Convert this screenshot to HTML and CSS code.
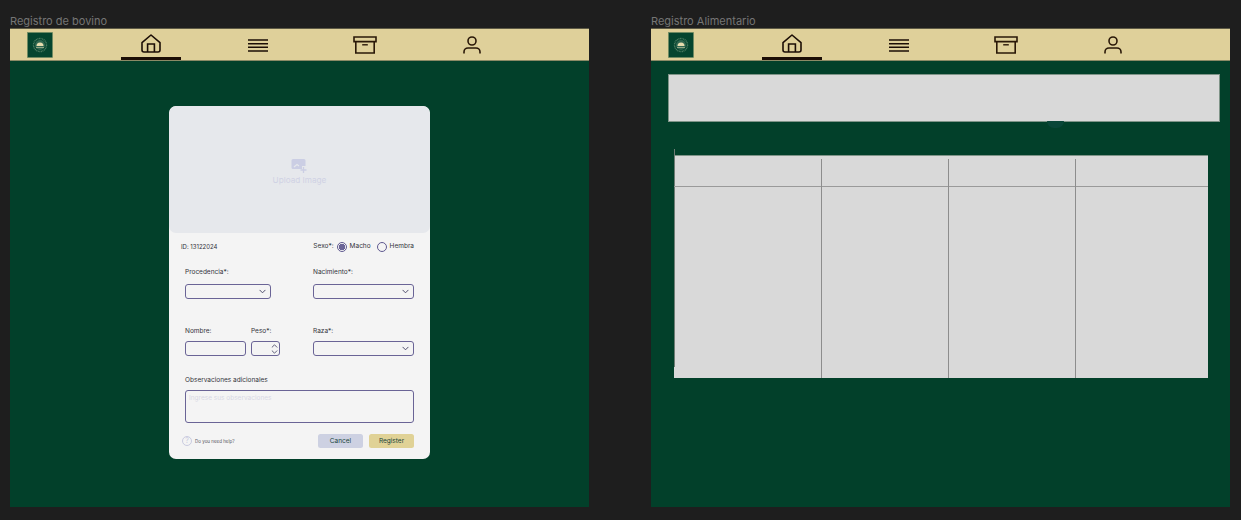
FILE: index.html
```html
<!DOCTYPE html>
<html lang="es">
<head>
<meta charset="utf-8">
<title>Registro</title>
<link rel="stylesheet" href="styles.css">
</head>
<body>
<svg class="defs" width="0" height="0" aria-hidden="true">
  <defs>
    <symbol id="i-logo" viewBox="0 0 26 26">
      <rect x="0.5" y="0.5" width="25" height="25" fill="#05452f" stroke="#6f8a62" stroke-width="0.6"/>
      <circle cx="13" cy="13" r="6.500" fill="none" stroke="#4d7c62" stroke-width="1.400" stroke-dasharray="1 .6"/>
      <circle cx="13" cy="13" r="5" fill="#2f6650"/>
      <path d="M9.500 14a3.500 3.500 0 0 1 7 0z" fill="#e6dcae"/>
      <rect x="9" y="15" width="8" height="1" fill="#8fa585"/>
    </symbol>
    <symbol id="i-home" viewBox="0 0 22 20">
      <path d="M2 8.600 11 1l9 7.600V16a2 2 0 0 1-2 2H4a2 2 0 0 1-2-2z" fill="none" stroke="#1c0e06" stroke-width="1.600" stroke-linejoin="round"/>
      <path d="M7.600 18V10h6.800v8" fill="none" stroke="#1c0e06" stroke-width="1.600"/>
    </symbol>
    <symbol id="i-menu" viewBox="0 0 20 13">
      <path d="M0 1h20M0 4.700h20M0 8.300h20M0 12h20" fill="none" stroke="#1c0e06" stroke-width="1.400"/>
    </symbol>
    <symbol id="i-box" viewBox="0 0 24 18">
      <path d="M1 1h22v4.600H1zM2.800 5.600V17h18.400V5.600" fill="none" stroke="#2a1808" stroke-width="1.600"/>
      <path d="M9.200 8.800h5.600" fill="none" stroke="#2a1808" stroke-width="1.400"/>
    </symbol>
    <symbol id="i-user" viewBox="0 0 18 18">
      <circle cx="9" cy="5" r="4" fill="none" stroke="#2a1808" stroke-width="1.600"/>
      <path d="M1 17.500v-1.500a4 4 0 0 1 4-4h8a4 4 0 0 1 4 4v1.500" fill="none" stroke="#2a1808" stroke-width="1.600"/>
    </symbol>
    <symbol id="i-chev" viewBox="0 0 8 5">
      <path d="M1 1l3 3 3-3" fill="none" stroke="#4b4a6a" stroke-width="1.100" stroke-linecap="round" stroke-linejoin="round"/>
    </symbol>
  </defs>
</svg>

<main class="canvas">
  <section class="artboard">
    <h2 class="artboard-title">Registro de bovino</h2>
    <div class="frame">
      <nav class="nav">
        <svg class="logo"><use href="#i-logo"/></svg>
        <a class="nav-item is-active"><svg class="ic-home"><use href="#i-home"/></svg></a>
        <a class="nav-item"><svg class="ic-menu"><use href="#i-menu"/></svg></a>
        <a class="nav-item"><svg class="ic-box"><use href="#i-box"/></svg></a>
        <a class="nav-item"><svg class="ic-user"><use href="#i-user"/></svg></a>
      </nav>
      <div class="frame-body center">
        <form class="card">
          <div class="upload">
            <svg class="upload-icon" viewBox="0 0 17 16">
              <path d="M2 1h11a1.500 1.500 0 0 1 1.500 1.500V8H11v3H2a1.500 1.500 0 0 1-1.500-1.500v-7A1.500 1.500 0 0 1 2 1z" fill="#cbcee4"/>
              <path d="M3 9l3-2.500 2 1.500" fill="none" stroke="#e6e8ec" stroke-width="1.200"/>
              <path d="M12.500 9v6M9.500 12h6" stroke="#cbcee4" stroke-width="1.300" fill="none"/>
            </svg>
            <span class="upload-text">Upload Image</span>
          </div>
          <div class="form">
            <div class="id-row">
              <span class="txt txt-id">ID: 13122024</span>
              <div class="sex">
                <span class="txt">Sexo*:</span>
                <span class="radio is-on"></span><span class="txt">Macho</span>
                <span class="radio"></span><span class="txt">Hembra</span>
              </div>
            </div>
            <div class="row row-a">
              <div class="col-l">
                <span class="txt">Procedencia*:</span>
                <div class="field sel sel-l"><svg class="chev"><use href="#i-chev"/></svg></div>
              </div>
              <div class="col-r">
                <span class="txt">Nacimiento*:</span>
                <div class="field sel"><svg class="chev"><use href="#i-chev"/></svg></div>
              </div>
            </div>
            <div class="row row-b">
              <div class="col-l pair">
                <div class="col-name">
                  <span class="txt">Nombre:</span>
                  <div class="field"></div>
                </div>
                <div class="col-peso">
                  <span class="txt">Peso*:</span>
                  <div class="field stepper">
                    <svg class="step up"><use href="#i-chev"/></svg>
                    <svg class="step"><use href="#i-chev"/></svg>
                  </div>
                </div>
              </div>
              <div class="col-r">
                <span class="txt">Raza*:</span>
                <div class="field sel"><svg class="chev"><use href="#i-chev"/></svg></div>
              </div>
            </div>
            <div class="obs">
              <span class="txt">Observaciones adicionales</span>
              <div class="area">Ingrese sus observaciones</div>
            </div>
            <div class="foot">
              <div class="help">
                <span class="help-ic">?</span>
                <span class="help-txt">Do you need help?</span>
              </div>
              <div class="btns">
                <button class="btn btn-cancel" type="button">Cancel</button>
                <button class="btn btn-reg" type="button">Register</button>
              </div>
            </div>
          </div>
        </form>
      </div>
    </div>
  </section>

  <section class="artboard">
    <h2 class="artboard-title">Registro Alimentario</h2>
    <div class="frame">
      <nav class="nav">
        <svg class="logo"><use href="#i-logo"/></svg>
        <a class="nav-item is-active"><svg class="ic-home"><use href="#i-home"/></svg></a>
        <a class="nav-item"><svg class="ic-menu"><use href="#i-menu"/></svg></a>
        <a class="nav-item"><svg class="ic-box"><use href="#i-box"/></svg></a>
        <a class="nav-item"><svg class="ic-user"><use href="#i-user"/></svg></a>
      </nav>
      <div class="frame-body feed">
        <div class="panel"><span class="blob"></span></div>
        <div class="table">
          <span class="tick"></span>
          <div class="tcol"><div class="thead"></div></div>
          <div class="tcol lined"><div class="thead"></div></div>
          <div class="tcol lined"><div class="thead"></div></div>
          <div class="tcol lined"><div class="thead"></div></div>
        </div>
      </div>
    </div>
  </section>
</main>
</body>
</html>
```
FILE: styles.css
```css
* { box-sizing: border-box; }
html, body { margin: 0; height: 100%; }
body {
  background: #1e1e1e;
  font-family: "Inter", "Noto Sans", sans-serif;
  overflow: hidden;
}
.defs { position: absolute; }
.canvas {
  display: flex;
  gap: 62px;
  padding: 14px 0 0 10px;
}
.artboard { width: 579px; }
.artboard-title {
  margin: 0;
  height: 14px;
  font: 400 11px/14px "Inter", sans-serif;
  color: #757575;
}
.frame {
  height: 479px;
  background: #02402a;
  display: flex;
  flex-direction: column;
}
.nav {
  height: 33px;
  flex: none;
  background: #dfd09a;
  border-top: 1px solid #5d5a45;
  border-bottom: 1px solid #8b8a66;
  display: flex;
  align-items: stretch;
  padding-left: 17px;
}
.logo { width: 26px; height: 26px; margin: 3px 68px 0 0; flex: none; }
.nav-item {
  width: 60px;
  margin-right: 47px;
  display: flex;
  justify-content: center;
  align-items: flex-start;
  position: relative;
}
.nav-item.is-active::after {
  content: "";
  position: absolute;
  left: 0;
  right: 0;
  bottom: 0;
  height: 3px;
  background: #1c0e06;
}
.ic-home { width: 22px; height: 20px; margin-top: 5px; }
.ic-menu { width: 20px; height: 13px; margin-top: 9.500px; }
.ic-box { width: 24px; height: 18px; margin-top: 6.500px; }
.ic-user { width: 18px; height: 18px; margin-top: 6.500px; }

.frame-body { flex: 1; }
.center { display: flex; justify-content: center; padding-top: 45px; }

.card {
  width: 261px;
  height: 353px;
  background: #f4f4f4;
  border-radius: 7px;
  overflow: hidden;
  display: flex;
  flex-direction: column;
}
.upload {
  height: 127px;
  flex: none;
  background: #e6e8ec;
  border-radius: 7px;
  display: flex;
  flex-direction: column;
  align-items: center;
  padding-top: 52px;
}
.upload-icon { width: 17px; height: 16px; }
.upload-text { font-size: 8.200px; line-height: 10px; color: #d0d2e4; margin-top: 1px; }
.form { padding: 0 16px; flex: 1; display: flex; flex-direction: column; }
.txt { font-size: 6.500px; line-height: 9px; color: #33333b; white-space: nowrap; }
.txt-id { font-size: 6px; }
.id-row {
  display: flex;
  justify-content: space-between;
  align-items: center;
  height: 13px;
  margin: 7px 0 0 -4px;
}
.sex { display: flex; align-items: center; gap: 2px; }
.radio {
  width: 10px;
  height: 10px;
  border-radius: 50%;
  border: 1px solid #5f5990;
  margin-right: 1px;
}
.radio.is-on { margin-left: 1px; }
.radio + .txt + .radio { margin-left: 4px; }
.radio.is-on { background: radial-gradient(circle, #6a6496 0 3px, #f4f4f4 3.500px); }
.row { display: flex; justify-content: space-between; }
.row-a { margin-top: 15px; height: 53px; }
.row-b { height: 55px; align-items: flex-start; padding-top: 6px; }
.col-l { width: 86px; display: flex; flex-direction: column; gap: 7px; }
.col-r { width: 101px; display: flex; flex-direction: column; gap: 7px; }
.row-b .col-r { gap: 5px; }
.pair { width: 95px; flex-direction: row; gap: 5px; }
.col-name { width: 61px; display: flex; flex-direction: column; gap: 5px; }
.col-peso { width: 29px; display: flex; flex-direction: column; gap: 5px; }
.field {
  height: 15px;
  border: 1px solid #6a6496;
  border-radius: 3px;
  position: relative;
}
.sel { display: flex; align-items: center; justify-content: flex-end; padding-right: 4px; }
.chev { width: 7px; height: 5px; }
.stepper { display: flex; flex-direction: column; align-items: flex-end; justify-content: center; padding-right: 1px; gap: 2px; }
.step { width: 7px; height: 4px; }
.step.up { transform: scaleY(-1); }
.obs { display: flex; flex-direction: column; gap: 5px; }
.area {
  height: 33px;
  border: 1px solid #6a6496;
  border-radius: 3px;
  padding: 3px;
  font-size: 6.500px;
  line-height: 9px;
  color: #d8d8e4;
}
.foot {
  display: flex;
  justify-content: space-between;
  align-items: center;
  margin: 11px 0 0 -3px;
}
.help { display: flex; align-items: center; gap: 3px; }
.help-ic {
  width: 10px;
  height: 10px;
  border-radius: 50%;
  border: 1px solid #c9cbe0;
  color: #c9cbe0;
  font-size: 7px;
  line-height: 8px;
  text-align: center;
}
.help-txt { font-size: 4.500px; color: #55555f; }
.btns { display: flex; gap: 6px; }
.btn {
  width: 45px;
  height: 14px;
  padding: 0;
  border: 0;
  border-radius: 2.500px;
  font: 400 6.500px/14px "Inter", sans-serif;
  color: #16443a;
}
.btn-cancel { background: #cdd1e2; }
.btn-reg { background: #e0d296; }

.feed { padding: 13px 0 0 17px; }
.panel {
  width: 552px;
  height: 48px;
  background: #d9d9d9;
  border: 1px solid #7f9488;
  position: relative;
}
.blob {
  position: absolute;
  left: 378px;
  top: 46px;
  width: 17px;
  height: 7px;
  border-radius: 0 0 9px 9px;
  background: #0a4638;
}
.table {
  margin: 33px 0 0 6px;
  width: 534px;
  height: 223px;
  background: #d9d9d9;
  border-top: 1px solid #7f9488;
  display: grid;
  grid-template-columns: 148px 127px 127px 132px;
  position: relative;
}
.tick {
  position: absolute;
  left: 0;
  top: -7px;
  height: 218px;
  width: 1px;
  background: #6e7c74;
}
.tcol { position: relative; }
.lined::before {
  content: "";
  position: absolute;
  left: -1px;
  top: 3px;
  bottom: 0;
  width: 1px;
  background: #8d8d8d;
}
.thead { height: 31px; border-bottom: 1px solid #9a9a9a; }
```
